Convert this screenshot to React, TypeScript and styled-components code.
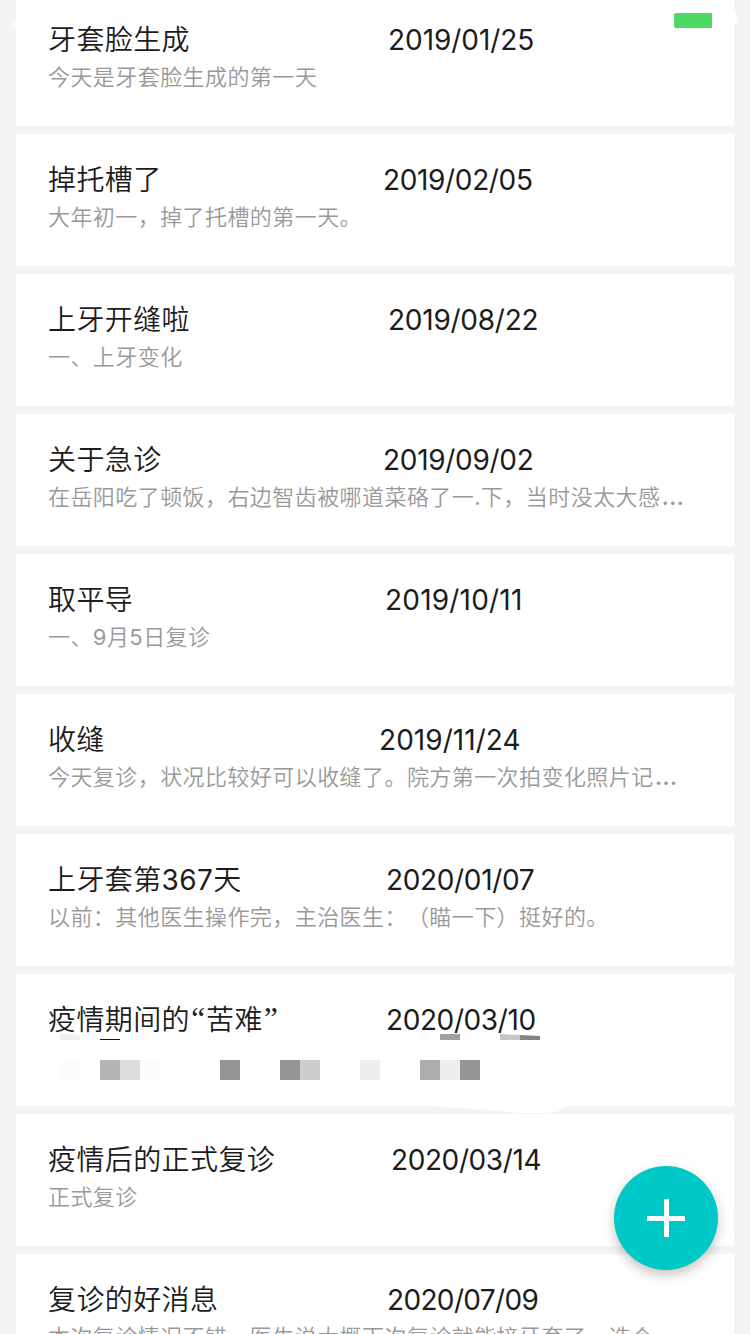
import React from 'react';
import styled, { createGlobalStyle } from 'styled-components';

const GlobalStyle = createGlobalStyle`
  * { box-sizing: border-box; }
  html, body { margin: 0; padding: 0; background: #f4f4f4; overflow: hidden; }
`;

const Screen = styled.main`
  position: relative;
  width: 750px;
  height: 1334px;
  overflow: hidden;
  background: #f4f4f4;
  font-family: Inter, 'Noto Sans CJK SC DemiLight', 'Noto Sans CJK SC', sans-serif;
  text-spacing-trim: space-all;
`;

const NoteList = styled.section`
  display: flex;
  flex-direction: column;
  gap: 8px;
  margin-top: -6px;
  padding: 0 16px;
`;

const Card = styled.article`
  position: relative;
  flex: none;
  height: 132px;
  padding: 26px 32px 0;
  background: #fff;
`;

const Heading = styled.div`
  display: flex;
  height: 40px;
  line-height: 40px;
  font-size: 28px;
  color: #1c1c1c;
  white-space: nowrap;
`;

const Title = styled.span<{ $width: number }>`
  flex: none;
  width: ${(p) => p.$width}px;
  letter-spacing: 0.4px;
`;

const Quote = styled.span`
  display: inline-block;
  width: 16px;
  text-align: center;
  letter-spacing: 0;
  font-family: 'Liberation Serif', serif;
  font-size: 31px;
  line-height: 1;
  vertical-align: 1px;
`;

const DateText = styled.time<{ $tracking: number }>`
  letter-spacing: ${(p) => p.$tracking}px;
`;

const Summary = styled.p`
  margin: 1px 0 0;
  height: 32px;
  line-height: 32px;
  font-size: 22px;
  letter-spacing: 0.43px;
  color: #999;
  white-space: nowrap;
`;

const Ellipsis = styled.span`
  margin-left: 1px;
  font-size: 26px;
  line-height: 1;
`;

const Mosaic = styled.svg`
  position: absolute;
  left: 0;
  top: 60px;
  width: 718px;
  height: 80px;
  z-index: 1;
`;

const Battery = styled.div`
  position: absolute;
  top: 13px;
  left: 674px;
  width: 38px;
  height: 15px;
  border-radius: 2px 0 0 2px;
  background: #4cd964;
`;

const EdgeMarks = styled.svg`
  position: absolute;
  top: 0;
  left: 0;
  width: 750px;
  height: 40px;
`;

const AddButton = styled.button`
  position: absolute;
  left: 614px;
  top: 1166px;
  z-index: 2;
  display: flex;
  align-items: center;
  justify-content: center;
  width: 104px;
  height: 104px;
  padding: 0;
  border: 0;
  border-radius: 50%;
  background: #00c8c6;
  box-shadow: 0 5px 12px rgba(40, 0, 0, 0.24);
`;

interface Note {
  title: React.ReactNode;
  date: string;
  dateOffset: number;
  tracking: number;
  summary?: string;
  truncated?: boolean;
}

const notes: Note[] = [
  { title: '牙套脸生成', date: '2019/01/25', dateOffset: 340, tracking: -0.05, summary: '今天是牙套脸生成的第一天' },
  { title: '掉托槽了', date: '2019/02/05', dateOffset: 335, tracking: -0.35, summary: '大年初一，掉了托槽的第一天。' },
  { title: '上牙开缝啦', date: '2019/08/22', dateOffset: 340, tracking: -0.25, summary: '一、上牙变化' },
  { title: '关于急诊', date: '2019/09/02', dateOffset: 335, tracking: -0.3, summary: '在岳阳吃了顿饭，右边智齿被哪道菜硌了一.下，当时没太大感', truncated: true },
  { title: '取平导', date: '2019/10/11', dateOffset: 337, tracking: 0.2, summary: '一、9月5日复诊' },
  { title: '收缝', date: '2019/11/24', dateOffset: 331, tracking: 0.05, summary: '今天复诊，状况比较好可以收缝了。院方第一次拍变化照片记', truncated: true },
  { title: '上牙套第367天', date: '2020/01/07', dateOffset: 338, tracking: -0.35, summary: '以前：其他医生操作完，主治医生：（瞄一下）挺好的。' },
  { title: <>疫情期间的<Quote>“</Quote>苦难<Quote>”</Quote></>, date: '2020/03/10', dateOffset: 338, tracking: -0.4 },
  { title: '疫情后的正式复诊', date: '2020/03/14', dateOffset: 343, tracking: -0.4, summary: '正式复诊' },
  { title: '复诊的好消息', date: '2020/07/09', dateOffset: 339, tracking: -0.65, summary: '本次复诊情况不错，医生说大概下次复诊就能接牙套了，选个' },
];

const blocks: [number, string][] = [
  [44, '#fcfcfc'], [84, '#b4b4b4'], [104, '#dcdcdc'], [124, '#fcfcfc'], [204, '#959595'],
  [264, '#959595'], [284, '#cdcdcd'], [344, '#eeeeee'], [404, '#adadad'], [424, '#eeeeee'], [444, '#969696'],
];

function HiddenSummary() {
  return (
    <Mosaic viewBox="0 0 718 80" aria-hidden="true">
      {blocks.map(([x, fill]) => (
        <rect key={x} x={x} y="26" width="20" height="20" fill={fill} />
      ))}
      <path d="M44 0h14l6 2v4H44z" fill="#f0f0f0" />
      <path d="M84 5h20v1H84z" fill="#111" />
      <path d="M424 0h20v6h-20z" fill="#a0a0a0" />
      <path d="M484 0l20 1v5h-20z" fill="#c5c5c5" />
      <path d="M504 1l20 1v4h-20z" fill="#858585" />
      <path d="M414 72h138l-12 6l-10 1h-28l-30-3z" fill="#fff" />
    </Mosaic>
  );
}

export default function App() {
  return (
    <Screen lang="zh-CN">
      <GlobalStyle />
      <NoteList>
        {notes.map((note) => (
          <Card key={note.date}>
            <Heading>
              <Title $width={note.dateOffset}>{note.title}</Title>
              <DateText $tracking={note.tracking}>{note.date}</DateText>
            </Heading>
            {note.summary ? (
              <Summary>
                {note.summary}
                {note.truncated && <Ellipsis>…</Ellipsis>}
              </Summary>
            ) : (
              <HiddenSummary />
            )}
          </Card>
        ))}
      </NoteList>
      <EdgeMarks viewBox="0 0 750 40" aria-hidden="true">
        <path d="M16 22h-3l-1 3 1 3h3zM734 11l2 1 2 7-2 5h-2z" fill="#fff" opacity="0.8" />
      </EdgeMarks>
      <Battery />
      <AddButton aria-label="添加">
        <svg width="38" height="38" viewBox="0 0 38 38" aria-hidden="true">
          <path d="M19.5 0v38M0 19.5h38" stroke="#fff" strokeWidth="5" />
        </svg>
      </AddButton>
    </Screen>
  );
}
